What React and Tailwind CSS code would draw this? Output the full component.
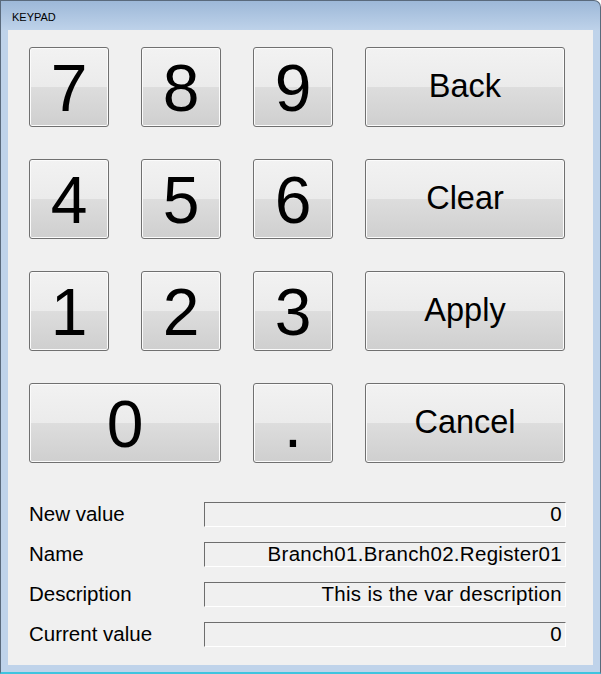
import React from "react";

const btn =
  "flex items-center justify-center rounded-[3px] border border-[#707070] bg-[linear-gradient(to_bottom,#f2f2f2_0%,#ebebeb_50%,#dddddd_50%,#cfcfcf_100%)] shadow-[inset_0_0_0_1px_#fbfbfb] text-black leading-none";

function Key({ label, wide, word }) {
  return (
    <div
      className={
        btn +
        " h-[80px] " +
        (wide ? "col-span-2 " : "") +
        (word ? "text-[32.5px]" : "text-[66px]")
      }
    >
      <span className={word ? "pb-[2px]" : "pt-[1px]"}>{label}</span>
    </div>
  );
}

function Field({ label, value }) {
  return (
    <div className="flex items-center h-[25px]">
      <div className="w-[175px] text-[20.5px] leading-none text-black">{label}</div>
      <div className="flex-1 h-[25px] flex items-center justify-end pr-[3px] border-t border-l border-t-[#6d6d6d] border-l-[#6d6d6d] border-b border-r border-b-white border-r-white text-[20.5px] tracking-[0.3px] leading-none text-black">
        {value}
      </div>
    </div>
  );
}

export default function App() {
  return (
    <div
      className="w-[601px] h-[674px] flex flex-col rounded-tr-[7px] border-l border-r border-t border-[#5a6a7c] border-b-2 border-b-[#3fc4df] bg-[linear-gradient(to_bottom,#9db8d8_0px,#bfd3ea_30px,#bfd3ea_100%)] overflow-hidden"
      style={{ fontFamily: '"Liberation Sans", Arial, sans-serif' }}
    >
      <div className="h-[29px] flex items-center pl-[11px] pt-[3px] text-[11px] text-black">
        KEYPAD
      </div>
      <div className="mx-[7px] mb-[7px] flex-1 bg-[#f0f0f0] flex flex-col pl-[21px] pr-[27px] pt-[17px]">
        <div className="grid grid-cols-[80px_80px_80px_200px] gap-[32px]">
          <Key label="7" />
          <Key label="8" />
          <Key label="9" />
          <Key label="Back" word />
          <Key label="4" />
          <Key label="5" />
          <Key label="6" />
          <Key label="Clear" word />
          <Key label="1" />
          <Key label="2" />
          <Key label="3" />
          <Key label="Apply" word />
          <Key label="0" wide />
          <Key label="." />
          <Key label="Cancel" word />
        </div>
        <div className="mt-[39px] flex flex-col gap-[15px]">
          <Field label="New value" value="0" />
          <Field label="Name" value="Branch01.Branch02.Register01" />
          <Field label="Description" value="This is the var description" />
          <Field label="Current value" value="0" />
        </div>
      </div>
    </div>
  );
}
